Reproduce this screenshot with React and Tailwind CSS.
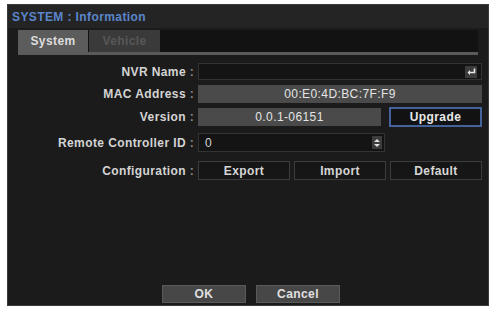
const Label = ({ children }) => (
  <div className="flex w-[190px] shrink-0 items-center">
    <div className="w-[178px] whitespace-nowrap text-right">{children}</div>
    <div className="w-[12px] text-center text-[#8a8a8a]">:</div>
  </div>
);

const DarkButton = ({ children, className = "" }) => (
  <div
    className={`flex h-[19px] w-[92px] items-center justify-center border border-[#3c3c3c] bg-[#161616] text-[#d6d6d6] ${className}`}
  >
    {children}
  </div>
);

export default function App() {
  return (
    <div
      className="h-[309px] w-[493px] overflow-hidden bg-white pl-[7px] pr-[4px] pt-[4px] pb-[3px]"
      style={{ fontFamily: '"Liberation Sans", Arial, sans-serif' }}
    >
      <div className="flex h-full w-full flex-col border border-[#3a3a3a] bg-[#1b1b1b] text-[12px] font-bold tracking-[0.4px] text-[#d4d4d4]">
        {/* title */}
        <div className="flex h-[23px] shrink-0 items-center bg-[#242424] pl-[4px] text-[#5a86cc]">
          SYSTEM : Information
        </div>

        {/* tabs */}
        <div className="mx-[10px] mt-[2px] flex h-[22px] shrink-0 bg-[#121212]">
          <div className="flex w-[70px] items-center justify-center bg-[#5c5c5c] text-[#dcdcdc]">
            System
          </div>
          <div className="ml-[1px] flex w-[71px] items-center justify-center bg-[#3a3a3a] text-[#575757]">
            Vehicle
          </div>
        </div>
        <div className="mx-[10px] h-[3px] shrink-0 bg-[#5a5a5a]" />

        {/* rows */}
        <div className="mt-[8px] flex h-[17px] items-center">
          <Label>NVR Name</Label>
          <div className="flex h-full w-[284px] items-center justify-end border border-[#333] bg-[#141414] pr-[4px]">
            <div className="flex h-[12px] w-[12px] items-center justify-center bg-[#3c3c3c]">
              <svg width="9" height="8" viewBox="0 0 9 8">
                <path d="M7.5 0.5 V4.5 H2" stroke="#e8e8e8" strokeWidth="1.6" fill="none" />
                <path d="M0.5 4.5 L3 2 V7 Z" fill="#e8e8e8" />
              </svg>
            </div>
          </div>
        </div>

        <div className="mt-[5px] flex h-[18px] items-center">
          <Label>MAC Address</Label>
          <div className="flex h-full w-[284px] items-center justify-center bg-[#4a4a4a] font-normal text-[#e4e4e4]">
            00:E0:4D:BC:7F:F9
          </div>
        </div>

        <div className="mt-[4px] flex h-[20px] items-center">
          <Label>Version</Label>
          <div className="flex h-[18px] w-[183px] items-center justify-center bg-[#4a4a4a] font-normal text-[#e4e4e4]">
            0.0.1-06151
          </div>
          <div className="ml-[8px] flex h-full w-[93px] items-center justify-center border-2 border-[#44639c] bg-[#121212] text-[#e8e8e8]">
            Upgrade
          </div>
        </div>

        <div className="mt-[6px] flex h-[19px] items-center">
          <Label>Remote Controller ID</Label>
          <div className="flex h-full w-[187px] items-center justify-between border border-[#333] bg-[#141414] pl-[6px] pr-[2px] font-normal">
            <span>0</span>
            <div className="flex h-[13px] w-[10px] flex-col items-center justify-center gap-[2px] bg-[#3c3c3c]">
              <svg width="6" height="3" viewBox="0 0 6 3"><path d="M0 3 L3 0 L6 3 Z" fill="#e0e0e0" /></svg>
              <svg width="6" height="3" viewBox="0 0 6 3"><path d="M0 0 L3 3 L6 0 Z" fill="#e0e0e0" /></svg>
            </div>
          </div>
        </div>

        <div className="mt-[9px] flex h-[19px] items-center">
          <Label>Configuration</Label>
          <div className="flex gap-[4px]">
            <DarkButton>Export</DarkButton>
            <DarkButton>Import</DarkButton>
            <DarkButton>Default</DarkButton>
          </div>
        </div>

        {/* footer */}
        <div className="mt-auto mb-[2px] flex justify-center gap-[10px] pl-[6px]">
          <div className="flex h-[18px] w-[84px] items-center justify-center border border-[#5a5a5a] bg-[#474747] text-[#e0e0e0]">
            OK
          </div>
          <div className="flex h-[18px] w-[84px] items-center justify-center border border-[#5a5a5a] bg-[#474747] text-[#e0e0e0]">
            Cancel
          </div>
        </div>
      </div>
    </div>
  );
}
